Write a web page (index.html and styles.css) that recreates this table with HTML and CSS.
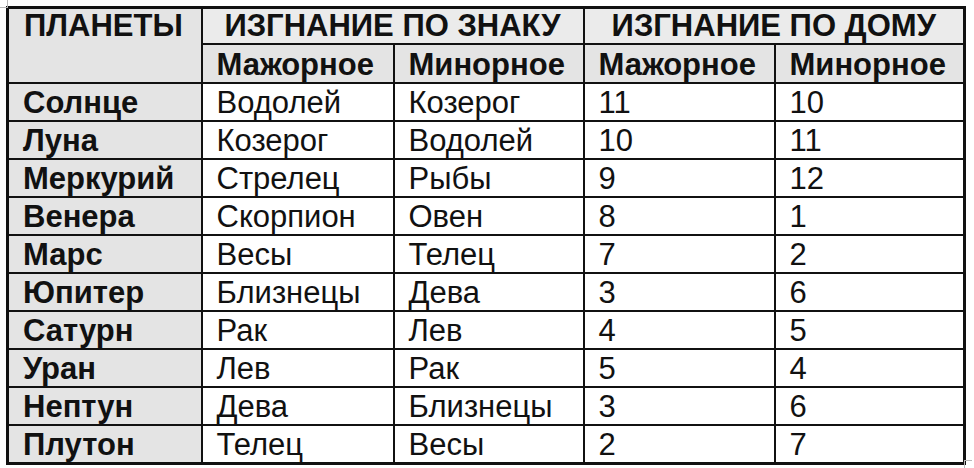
FILE: index.html
```html
<!DOCTYPE html>
<html lang="ru">
<head>
<meta charset="utf-8">
<title>Изгнание планет</title>
<link rel="stylesheet" href="styles.css">
</head>
<body>
<div class="page">
  <span class="mark mark-tl"></span>
  <table class="exile">
    <colgroup>
      <col class="c1"><col class="c2"><col class="c3"><col class="c4"><col class="c5">
    </colgroup>
    <thead>
      <tr class="h1">
        <th rowspan="2" class="planet-head">ПЛАНЕТЫ</th>
        <th colspan="2" class="group">ИЗГНАНИЕ ПО ЗНАКУ</th>
        <th colspan="2" class="group">ИЗГНАНИЕ ПО ДОМУ</th>
      </tr>
      <tr class="h2">
        <th>Мажорное</th><th>Минорное</th><th>Мажорное</th><th>Минорное</th>
      </tr>
    </thead>
    <tbody>
      <tr><th>Солнце</th><td>Водолей</td><td>Козерог</td><td>11</td><td>10</td></tr>
      <tr><th>Луна</th><td>Козерог</td><td>Водолей</td><td>10</td><td>11</td></tr>
      <tr><th>Меркурий</th><td>Стрелец</td><td>Рыбы</td><td>9</td><td>12</td></tr>
      <tr><th>Венера</th><td>Скорпион</td><td>Овен</td><td>8</td><td>1</td></tr>
      <tr><th>Марс</th><td>Весы</td><td>Телец</td><td>7</td><td>2</td></tr>
      <tr><th>Юпитер</th><td>Близнецы</td><td>Дева</td><td>3</td><td>6</td></tr>
      <tr><th>Сатурн</th><td>Рак</td><td>Лев</td><td>4</td><td>5</td></tr>
      <tr><th>Уран</th><td>Лев</td><td>Рак</td><td>5</td><td>4</td></tr>
      <tr><th>Нептун</th><td>Дева</td><td>Близнецы</td><td>3</td><td>6</td></tr>
      <tr><th>Плутон</th><td>Телец</td><td>Весы</td><td>2</td><td>7</td></tr>
    </tbody>
  </table>
  <span class="mark mark-br"></span>
</div>
</body>
</html>
```
FILE: styles.css
```css
html, body {
  margin: 0;
  padding: 0;
  background: #ffffff;
}

.page {
  position: relative;
  width: 974px;
  height: 468px;
  padding: 6px 0 0 6px;
  box-sizing: border-box;
  font-family: "Liberation Sans", Arial, sans-serif;
  color: #111;
}

.exile {
  border-collapse: collapse;
  table-layout: fixed;
  width: 959px;
  border: 3px solid #111;
}

.c1 { width: 194px; }
.c2 { width: 192px; }
.c3 { width: 190px; }
.c4 { width: 191px; }
.c5 { width: 190px; }

.exile th,
.exile td {
  border: 2px solid #111;
  padding: 2px 0 0 14px;
  line-height: 34px;
  font-size: 31px;
  text-align: left;
  vertical-align: top;
  white-space: nowrap;
  overflow: hidden;
}

.exile td {
  background: #ffffff;
  font-weight: normal;
}

.exile th {
  background: #e4e4e4;
  font-weight: bold;
}

.h1 th {
  padding-top: 0;
}

.h2 th {
  padding-top: 3px;
}

.exile th.group {
  text-align: center;
  padding-left: 0;
  background: #ebebeb;
}

.exile th.planet-head {
  padding-top: 0;
  padding-left: 15px;
}

.mark {
  position: absolute;
  width: 7px;
  height: 7px;
  border-color: #b8b8b8;
  border-style: solid;
  border-width: 0;
}

.mark-tl {
  left: 0;
  top: 0;
  border-right-width: 1px;
  border-bottom-width: 1px;
}

.mark-br {
  right: 2px;
  bottom: 0;
  border-left-width: 1px;
  border-top-width: 1px;
}
```
